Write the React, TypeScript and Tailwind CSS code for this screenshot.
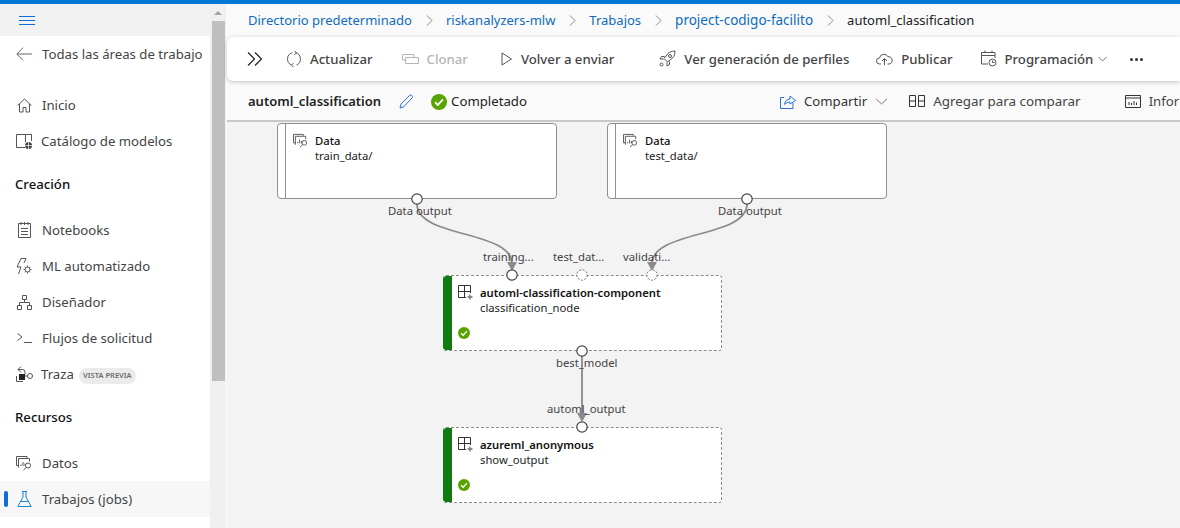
import React from "react";

const font = { fontFamily: '"Noto Sans", "Open Sans", sans-serif' };

const S = ({ w = 20, h = 20, vb = "0 0 20 20", c = "#555", sw = 1, children, className = "" }: any) => (
  <svg width={w} height={h} viewBox={vb} fill="none" stroke={c} strokeWidth={sw} className={`shrink-0 ${className}`}>
    {children}
  </svg>
);

const DataIcon = ({ size = 16 }: { size?: number }) => (
  <S w={size} h={size} vb="0 0 16 16" c="#555">
    <path d="M3 10.5H.5V1.5H11V3" />
    <path d="M2.5 12.5V3.5H13.5V6.5" />
    <path d="M5 9.5V11M7 7V11M9 8.5V11" />
    <circle cx="12" cy="10.5" r="2.5" />
    <path d="M10.2 12.5 7.5 15" />
  </S>
);

const Check = ({ size = 14 }: { size?: number }) => (
  <svg width={size} height={size} viewBox="0 0 14 14" className="shrink-0">
    <circle cx="7" cy="7" r="7" fill="#57a300" />
    <path d="M3.6 7.2 6 9.6 10.5 4.8" stroke="#fff" strokeWidth="1.6" fill="none" />
  </svg>
);

const CompIcon = () => (
  <svg width="15" height="15" viewBox="0 0 15 15" fill="none" className="shrink-0">
    <path d="M.5.5H12.5V8M.5.5V12.5H8M6.5.5V12.5M.5 6.5H12.5" stroke="#333" strokeWidth="1" />
    <path d="M12 9.5V14.5M9.5 12H14.5" stroke="#777" strokeWidth="1.4" />
  </svg>
);

const NavItem = ({ icon, label, active, gap = "gap-[10px]", children }: any) => (
  <div className={`relative flex h-9 items-center pl-4 ${gap} ${active ? "bg-[#f7f7f7]" : ""}`}>
    {active && <span className="absolute left-1 top-[10px] h-[16px] w-[4px] rounded-sm bg-[#0f6cdb]" />}
    <span className="flex w-[16px] justify-center">{icon}</span>
    <span className="translate-y-px text-[13.2px] text-[#444]">{label}</span>
    {children}
  </div>
);

const SectionTitle = ({ children, className = "" }: any) => (
  <div className={`pl-[15px] text-[13.2px] font-medium text-[#111] ${className}`}>{children}</div>
);

const Sidebar = () => (
  <div className="flex h-full w-[226px] shrink-0">
    <div className="w-[210px] overflow-hidden bg-white">
      <div className="flex h-8 items-center bg-[#f2f2f2] pl-[19px]">
        <svg width="16" height="9" viewBox="0 0 16 9" stroke="#0f6cdb" strokeWidth="1">
          <path d="M0 .5H16M0 4.5H16M0 8.5H16" />
        </svg>
      </div>
      <div className="flex h-9 items-center gap-[10px] pl-4">
        <S w={16} h={14} vb="0 0 16 14" c="#666">
          <path d="M7 .7.8 7l6.2 6.3M1 7H16" />
        </S>
        <span className="translate-y-px text-[13.2px] text-[#444]">Todas las áreas de trabajo</span>
      </div>
      <div className="h-[15px]" />
      <NavItem
        label="Inicio"
        icon={
          <S w={15} h={15} vb="0 0 15 15">
            <path d="M.6 7.500 7.500 1l6.900 6.500M2.500 6v8h3.500V9.500h3V14h3.500V6" />
          </S>
        }
      />
      <NavItem
        label="Catálogo de modelos"
        gap="gap-[9px]"
        icon={
          <S w={17} h={17} vb="0 0 17 17">
            <path d="M9 14.500H.5V1.500H15.500V8M9.500 1.500V9" />
            <circle cx="12.500" cy="12.500" r="3.500" fill="#444" stroke="none" />
            <path d="M9 12.500H16M12.500 9V16" stroke="#fff" strokeWidth="0.7" />
          </S>
        }
      />
      <SectionTitle className="mt-[16px] mb-[18px] h-[19px] leading-[19px]">Creación</SectionTitle>
      <NavItem
        label="Notebooks"
        icon={
          <S w={13} h={16} vb="0 0 13 16">
            <path d="M.5 1.500H12.500V15.500H.5ZM3 0V3M6.500 0V3M10 0V3M3 6.500H10M3 9.500H10M3 12.500H10" />
          </S>
        }
      />
      <NavItem
        label="ML automatizado"
        icon={
          <S w={16} h={17} vb="0 0 16 17">
            <path d="M5 .5 1 9h4l-2.500 7M5 .5h5L8 5" />
            <circle cx="11.500" cy="11.500" r="2.500" />
            <path d="M11.500 7.500v1.500M11.500 14v1.500M7.500 11.500H9M14 11.500h1.500M8.800 8.800l1 1M13.300 13.300l1 1M14.300 8.800l-1 1M9.800 13.300l-1 1" />
          </S>
        }
      />
      <NavItem
        label="Diseñador"
        icon={
          <S w={15} h={15} vb="0 0 15 15">
            <path d="M5.500.5h4v4h-4ZM.5 10.500h4v4h-4ZM10.500 10.500h4v4h-4ZM7.500 4.500v3M2.500 10.500v-3h10v3" />
          </S>
        }
      />
      <NavItem
        label="Flujos de solicitud"
        icon={
          <S w={15} h={10} vb="0 0 15 10">
            <path d="M.5.5 5 4 .5 7.500M7 9.500h8" />
          </S>
        }
      />
      <NavItem
        label="Traza"
        gap="gap-[9px]"
        icon={
          <S w={17} h={17} vb="0 0 17 17">
            <path d="M5 .5 2 3.500l3 3M2 3.500h4.500a2.500 2.500 0 0 1 2.500 2.500v2" />
            <circle cx="14" cy="10" r="2.500" />
            <path d="M9 10h2.500" />
            <rect x="3" y="8" width="6" height="6" fill="#222" stroke="none" />
            <path d="M.5 10v5.500H7" />
          </S>
        }
      >
        <span className="mt-[3px] -ml-[4px] flex h-4 w-[57px] items-center justify-center rounded-full bg-[#ebebeb] text-[7.5px] font-semibold text-[#6b6b6b]">
          VISTA PREVIA
        </span>
      </NavItem>
      <SectionTitle className="mt-[16px] mb-[18px] h-[19px] leading-[19px]">Recursos</SectionTitle>
      <NavItem label="Datos" icon={<DataIcon />} />
      <NavItem
        label="Trabajos (jobs)"
        active
        icon={
          <S w={15} h={16} vb="0 0 15 16" c="#1a86d0">
            <path d="M5 .5h5M6 .5V6L.8 15.500H14.200L9 6V.5M3.500 10.500h8" />
          </S>
        }
      />
    </div>
    <div className="flex w-4 flex-col items-center bg-[#f0f0f0]">
      <div className="flex h-[17px] w-full items-center justify-center">
        <span className="h-0 w-0 border-x-[4px] border-b-[4px] border-x-transparent border-b-[#a3a3a3]" />
      </div>
      <div className="h-[360px] w-[13px] bg-[#bfbfbf]" />
    </div>
  </div>
);

const Sep = () => (
  <svg width="7" height="11" viewBox="0 0 7 11" fill="none" stroke="#8a8a8a" className="ml-[14px] mr-[13px] shrink-0">
    <path d="M1 .5 6 5.500 1 10.500" />
  </svg>
);

const Crumbs = () => (
  <div className="flex h-[33px] items-center pl-[21px] text-[13px] text-[#0f6cbd]">
    <span>Directorio predeterminado</span>
    <Sep />
    <span>riskanalyzers-mlw</span>
    <Sep />
    <span>Trabajos</span>
    <Sep />
    <span className="text-[13.5px]">project-codigo-facilito</span>
    <Sep />
    <span className="text-[#222]">automl_classification</span>
  </div>
);

const Btn = ({ icon, label, disabled, className = "" }: any) => (
  <div className={`flex shrink-0 items-center gap-[8px] font-medium ${disabled ? "text-[#b5b5b5]" : "text-[#444]"} ${className}`}>
    {icon}
    <span className="translate-y-px">{label}</span>
  </div>
);

const Toolbar = () => (
  <div className="flex h-[44px] items-center rounded-l-md bg-white pl-[20px] text-[13.2px] shadow-[0_1px_4px_rgba(0,0,0,0.22)]">
    <svg width="16" height="14" viewBox="0 0 16 14" fill="none" stroke="#222" strokeWidth="1.2" className="shrink-0">
      <path d="M1 .5 7.500 7 1 13.500M8 .5 14.500 7 8 13.500" />
    </svg>
    <Btn
      className="ml-[23px]"
      label="Actualizar"
      icon={
        <S w={16} h={18} vb="0 0 16 18">
          <path d="M6.500 2.700A6.500 6.500 0 0 0 5.500 15M9.500 2.700A6.500 6.500 0 0 1 10.500 15M8.500.8 10.500 2.800 8.500 4.800M7.500 13.200 5.500 15.200 7.500 17.200" />
        </S>
      }
    />
    <Btn
      className="ml-[29px]"
      disabled
      label="Clonar"
      icon={
        <S w={17} h={10} vb="0 0 17 10" c="#b5b5b5">
          <path d="M12 3V.5H.5V6H3M3.500 3.500H16.500V9.500H3.500Z" />
        </S>
      }
    />
    <Btn
      className="ml-[33px]"
      label="Volver a enviar"
      icon={
        <S w={12} h={14} vb="0 0 12 14">
          <path d="M1 1 10.500 7 1 13Z" />
        </S>
      }
    />
    <Btn
      className="ml-[45px]"
      label="Ver generación de perfiles"
      icon={
        <S w={17} h={17} vb="0 0 17 17">
          <path d="M16 1c-4 0-7 1.500-9 5L5 8.500l3.500 3.500L11 10c3.500-2 5-5 5-9ZM5.500 6.500H2.500L1 9h3.500M10.500 11.500V14.500L8 16v-3.500" />
          <circle cx="11" cy="6" r="1.500" />
          <circle cx="2.500" cy="14.500" r="1.500" />
        </S>
      }
    />
    <Btn
      className="ml-[27px]"
      label="Publicar"
      icon={
        <S w={17} h={12} vb="0 0 17 12">
          <path d="M5 11H3.500A3 3 0 0 1 3.500 5 4.500 4.500 0 0 1 12 3.800 3.600 3.600 0 0 1 13 11h-1.500M8.500 12V6M6 8l2.500-2.500L11 8" />
        </S>
      }
    />
    <Btn
      className="ml-[28px]"
      label="Programación"
      icon={
        <S w={16} h={17} vb="0 0 16 17">
          <path d="M7 14H.5V2.500H14V8M.5 5.500H14M4 .5V3M11 .5V3" />
          <circle cx="11.500" cy="12.500" r="3.500" />
          <path d="M11.500 10.500V12.500H13.500" />
        </S>
      }
    />
    <svg width="9" height="6" viewBox="0 0 9 6" fill="none" stroke="#777" className="ml-[5px] shrink-0">
      <path d="M.5 1 4.500 5 8.500 1" />
    </svg>
    <div className="ml-[23px] flex gap-[2px]">
      <span className="h-[3px] w-[3px] rounded-full bg-[#333]" />
      <span className="h-[3px] w-[3px] rounded-full bg-[#333]" />
      <span className="h-[3px] w-[3px] rounded-full bg-[#333]" />
    </div>
  </div>
);

const TitleRow = () => (
  <div className="flex h-[41px] items-center overflow-hidden whitespace-nowrap border-b-2 border-[#c8c8c8] pl-[21px] pt-[2px] text-[13.2px]">
    <span className="text-[13px] font-semibold text-[#222]">automl_classification</span>
    <svg width="15" height="15" viewBox="0 0 15 15" fill="none" stroke="#2b6fd6" className="ml-[18px] shrink-0">
      <path d="M1 14 2 10 11 1c1-.8 3 1 2.500 2.500L4.500 13Z" />
    </svg>
    <span className="ml-[17px]">
      <Check size={16} />
    </span>
    <span className="ml-[4px] text-[#222]">Completado</span>
    <div className="ml-[253px] flex shrink-0 items-center gap-[8px] text-[#444]">
      <svg width="16" height="15" viewBox="0 0 16 15" fill="none" stroke="#2b6fd6" className="shrink-0">
        <path d="M4 3.500H.5V14.500H13V9M4.500 10.500C5 7 7 5 10 5V2l5.500 4.500L10 10V8c-2 0-4 .8-5.500 2.500Z" />
      </svg>
      <span className="text-[#333]">Compartir</span>
      <svg width="13" height="7" viewBox="0 0 13 7" fill="none" stroke="#777" className="shrink-0">
        <path d="M1 .8 6.500 6 12 .8" />
      </svg>
    </div>
    <div className="ml-[21px] flex shrink-0 items-center gap-[8px] text-[13.4px] text-[#444]">
      <svg width="16" height="12" viewBox="0 0 16 12" fill="none" stroke="#333" className="shrink-0">
        <path d="M.5.5h6v11h-6ZM9.500.5h6v11h-6ZM.5 6h6M9.500 6h6" />
      </svg>
      <span>Agregar para comparar</span>
    </div>
    <div className="ml-[44px] flex shrink-0 items-center gap-[8px] text-[#444]">
      <svg width="16" height="13" viewBox="0 0 16 13" fill="none" stroke="#333" className="shrink-0">
        <path d="M.5.5h15v12H.5ZM.5 3h15M4 10V7M6.500 10V8M9 10V6M11.500 10V7.500" />
      </svg>
      <span>Informes</span>
    </div>
  </div>
);

const Port = ({ x, y, dashed }: { x: number; y: number; dashed?: boolean }) => (
  <circle
    cx={x}
    cy={y}
    r="5.200"
    fill="#fff"
    stroke={dashed ? "#666" : "#444"}
    strokeWidth={dashed ? 1 : 1.200}
    strokeDasharray={dashed ? "2 1.500" : undefined}
  />
);

const Edges = () => (
  <svg className="absolute left-0 top-0" width="953" height="406" viewBox="227 122 953 406" fill="none">
    <g stroke="#8a8a8a" strokeWidth="1.800">
      <path d="M417 204C417 238 512 230 512 264" />
      <path d="M747 204C747 238 652 230 652 264" />
      <path d="M582 355V415" />
    </g>
    <g fill="#8a8a8a">
      <path d="M507 262H517L512 271Z" />
      <path d="M647 262H657L652 271Z" />
      <path d="M577 413H587L582 422Z" />
    </g>
  </svg>
);

const Ports = () => (
  <svg className="absolute left-0 top-0" width="953" height="406" viewBox="227 122 953 406" fill="none">
    <Port x={417} y={199} />
    <Port x={747} y={199} />
    <Port x={512} y={275} />
    <Port x={582} y={275} dashed />
    <Port x={652} y={275} dashed />
    <Port x={582} y={351} />
    <Port x={582} y={427} />
  </svg>
);

const DataNode = ({ sub, left }: { sub: string; left: string }) => (
  <div className={`absolute top-[1px] flex h-[76px] w-[280px] rounded-[4px] border border-[#8f8f8f] bg-white ${left}`}>
    <div className="w-[8px] border-r border-[#8f8f8f]" />
    <div className="flex gap-[7px] pl-[7px] pt-[9px]">
      <DataIcon size={15} />
      <div className="text-[11.250px] leading-[15px] text-[#222]">
        <div className="font-medium text-[#111]">Data</div>
        <div>{sub}</div>
      </div>
    </div>
  </div>
);

const CompNode = ({ title, sub, top }: { title: string; sub: string; top: string }) => (
  <div className={`absolute left-[216px] flex h-[76px] w-[279px] overflow-hidden rounded-[3px] border border-l-0 border-dashed border-[#8a8a8a] bg-white ${top}`}>
    <div className="w-[9px] rounded-l-[3px] bg-[#107c10]" />
    <div className="flex flex-col pl-[6px] pt-[9px]">
      <div className="flex gap-[7px]">
        <CompIcon />
        <div className="text-[11.250px] leading-[15px] text-[#222]">
          <div className="font-semibold text-[#111]">{title}</div>
          <div>{sub}</div>
        </div>
      </div>
      <div className="mt-[12px]">
        <Check size={12} />
      </div>
    </div>
  </div>
);

const Label = ({ children, className }: any) => (
  <div className={`absolute text-[11.300px] leading-[14px] text-[#444] ${className}`}>{children}</div>
);

const Canvas = () => (
  <div className="relative min-h-0 flex-1 overflow-hidden bg-[#f3f3f3]">
    <DataNode sub="train_data/" left="left-[50px]" />
    <DataNode sub="test_data/" left="left-[380px]" />
    <CompNode title="automl-classification-component" sub="classification_node" top="top-[153px]" />
    <CompNode title="azureml_anonymous" sub="show_output" top="top-[305px]" />
    <Edges />
    <Label className="left-[161px] top-[82px]">Data output</Label>
    <Label className="left-[491px] top-[82px]">Data output</Label>
    <Label className="left-[256px] top-[128px]">training...</Label>
    <Label className="left-[326px] top-[128px]">test_dat...</Label>
    <Label className="left-[396px] top-[128px]">validati...</Label>
    <Label className="left-[329px] top-[234px]">best_model</Label>
    <Label className="left-[320px] top-[280px]">automl_output</Label>
    <Ports />
  </div>
);

export default function App() {
  return (
    <div className="flex h-[528px] w-[1180px] flex-col overflow-hidden whitespace-nowrap bg-[#fafafa]" style={font}>
      <div className="h-1 shrink-0 bg-[#0078d4]" />
      <div className="flex min-h-0 flex-1">
        <Sidebar />
        <div className="flex min-w-0 flex-1 flex-col pl-px">
          <Crumbs />
          <Toolbar />
          <TitleRow />
          <Canvas />
        </div>
      </div>
    </div>
  );
}
